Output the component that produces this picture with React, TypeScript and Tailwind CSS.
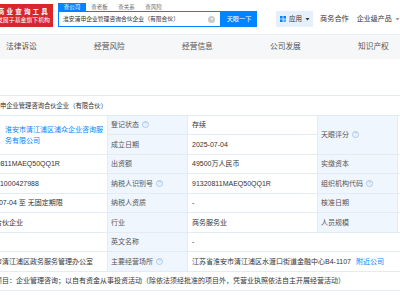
import React from 'react';

const label = 'flex items-center bg-[#f0f6fe] pl-[3px] text-[#555]';
const value = 'flex items-center whitespace-nowrap bg-white pl-[4px] text-[#333]';

const Help = () => (
  <span className="ml-[3px] inline-flex h-[7px] w-[7px] items-center justify-center rounded-full border border-[#a9c8ee] text-[5px] leading-none text-[#a9c8ee]">
    ?
  </span>
);

const Caret = ({ color = '#333' }: { color?: string }) => (
  <svg width="5" height="4" viewBox="0 0 5 4" className="ml-[3px]">
    <path d="M0.5 1 L4.5 1 L2.5 3.5 Z" fill={color} />
  </svg>
);

const navItems = ['法律诉讼', '经营风险', '经营信息', '公司发展', '知识产权'];

export default function App() {
  return (
    <div className="h-[300px] w-[400px] overflow-hidden bg-white [font-family:'Liberation_Sans','Noto_Sans_CJK_SC',sans-serif]">
      {/* top bar */}
      <header className="flex h-[35px] items-start border-b border-[#eceef1] bg-white">
        <div className="mt-[4px] flex h-[23px] w-[53px] shrink-0 flex-col items-end justify-center overflow-hidden whitespace-nowrap bg-[#d8262d] pr-[3px] text-white">
          <span className="text-[6.5px] font-bold leading-[9px] tracking-[2.2px]">商业查询工具</span>
          <span className="text-[5.9px] leading-[9px]">国家中小企业发展子基金旗下机构</span>
        </div>

        <div className="ml-[5px] mt-[3px] flex flex-col">
          <div className="flex h-[8px] text-[5.5px] leading-[8px]">
            <span className="w-[28px] bg-[#0084ff] text-center text-white">查公司</span>
            <span className="w-[27px] text-center text-[#666]">查老板</span>
            <span className="w-[27px] text-center text-[#666]">查关系</span>
            <span className="w-[27px] text-center text-[#666]">查风险</span>
          </div>
          <div className="flex h-[16px]">
            <div className="flex w-[163px] items-center border border-[#0084ff] pl-[4px] pr-[5px]">
              <span className="flex-1 whitespace-nowrap text-[5.8px] text-[#333]">淮安浦申企业管理咨询合伙企业（有限合伙）</span>
              <span className="flex h-[7px] w-[7px] items-center justify-center rounded-full bg-[#c9c9c9]">
                <svg width="4" height="4" viewBox="0 0 4 4">
                  <path d="M0.8 0.8 L3.2 3.2 M3.2 0.8 L0.8 3.2" stroke="#fff" strokeWidth="0.7" />
                </svg>
              </span>
            </div>
            <button className="w-[36px] bg-[#0084ff] text-[6.2px] text-white">天眼一下</button>
          </div>
        </div>

        <div className="ml-[19px] mt-[11px] flex h-[16px] w-[37px] items-center bg-[#e6f0fd] pl-[4px] text-[6.5px] text-[#333]">
          <svg width="6" height="6" viewBox="0 0 6 6" className="mr-[3px]">
            <rect x="0" y="0" width="2.6" height="2.6" fill="#0084ff" />
            <rect x="3.4" y="0" width="2.6" height="2.6" fill="#0084ff" />
            <rect x="0" y="3.4" width="2.6" height="2.6" fill="#0084ff" />
            <rect x="3.4" y="3.4" width="2.6" height="2.6" fill="#5aaaff" />
          </svg>
          应用
          <Caret />
        </div>
        <div className="ml-[7px] mt-[11px] flex h-[16px] items-center whitespace-nowrap text-[7.2px] text-[#333]">商务合作</div>
        <div className="ml-[8px] mt-[11px] flex h-[16px] items-center whitespace-nowrap text-[7px] text-[#333]">
          企业级产品
          <Caret color="#999" />
        </div>
      </header>

      {/* section tabs */}
      <nav className="flex h-[24px] items-center bg-[#f6f7f9] pl-[6px] text-[7.7px] text-[#555]">
        {navItems.map((t) => (
          <span key={t} className="w-[88px] shrink-0 whitespace-nowrap">
            {t}
          </span>
        ))}
      </nav>

      <div className="h-[36px]" />

      {/* business info table */}
      <div className="ml-[-110px] grid w-[608px] grid-cols-[86px_130px_79px_129px_79px_100px] auto-rows-[18.5px] gap-px border-y border-[#e4ebf4] bg-[#e4ebf4] text-[7px] leading-[11px]">
        <div className="col-span-6 flex items-center whitespace-nowrap bg-white pl-[91px] text-[6.3px] text-[#333]">
          淮安浦申企业管理咨询合伙企业（有限合伙）
        </div>

        <div className={`${label} row-span-2`}>执行事务合伙人</div>
        <div className="row-span-2 flex items-center bg-white pl-[28px] pr-[2px] text-[#0084ff]">
          淮安市清江浦区浦众企业咨询服务有限公司
        </div>
        <div className={label}>
          登记状态
          <Help />
        </div>
        <div className={`${value} text-[#21a559]`}>存续</div>
        <div className={`${label} row-span-2`}>
          天眼评分
          <Help />
        </div>
        <div className={`${value} row-span-2`} />

        <div className={label}>成立日期</div>
        <div className={value}>2025-07-04</div>

        <div className={label}>统一社会信用代码</div>
        <div className={value}>91320811MAEQ50QQ1R</div>
        <div className={label}>出资额</div>
        <div className={value}>49500万人民币</div>
        <div className={label}>实缴资本</div>
        <div className={value}>-</div>

        <div className={label}>工商注册号</div>
        <div className={value}>320811000427988</div>
        <div className={label}>
          纳税人识别号
          <Help />
        </div>
        <div className={value}>91320811MAEQ50QQ1R</div>
        <div className={label}>
          组织机构代码
          <Help />
        </div>
        <div className={value}>MAEQ50QQ-1</div>

        <div className={label}>营业期限</div>
        <div className={value}>2025-07-04 至 无固定期限</div>
        <div className={label}>纳税人资质</div>
        <div className={value}>-</div>
        <div className={label}>核准日期</div>
        <div className={value}>2025-07-04</div>

        <div className={label}>企业类型</div>
        <div className={value}>有限合伙企业</div>
        <div className={label}>行业</div>
        <div className={value}>商务服务业</div>
        <div className={label}>人员规模</div>
        <div className={value}>-</div>

        <div className={label}>参保人数</div>
        <div className={value} />
        <div className={label}>英文名称</div>
        <div className={`${value} col-span-3`}>-</div>

        <div className={label}>登记机关</div>
        <div className={value}>淮安市清江浦区政务服务管理办公室</div>
        <div className={label}>
          主要经营场所
          <Help />
        </div>
        <div className={`${value} col-span-3`}>
          江苏省淮安市清江浦区水渡口街道金融中心B4-1107
          <span className="ml-[5px] text-[#0084ff]">附近公司</span>
        </div>

        <div className={label}>经营范围</div>
        <div className={`${value} col-span-5`}>
          一般项目：企业管理咨询；以自有资金从事投资活动（除依法须经批准的项目外，凭营业执照依法自主开展经营活动）
        </div>
      </div>
    </div>
  );
}
